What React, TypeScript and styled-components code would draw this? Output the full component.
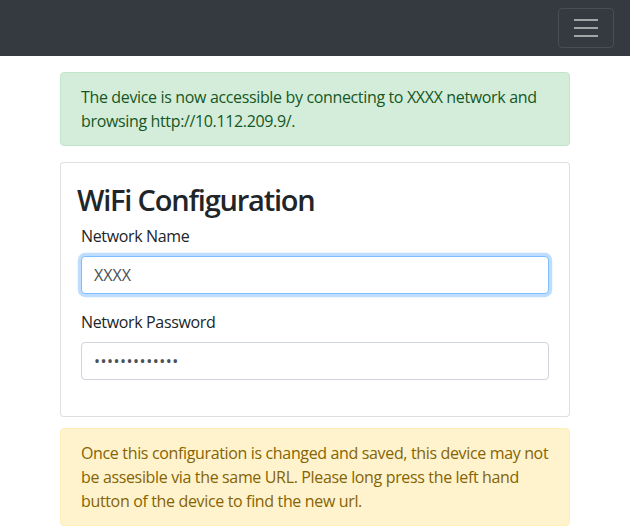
import React from 'react';
import styled, { createGlobalStyle } from 'styled-components';

const GlobalStyle = createGlobalStyle`
  * { box-sizing: border-box; }
  body {
    margin: 0;
    background: #ffffff;
    color: #212529;
    font-family: "Open Sans", "Noto Sans", sans-serif;
    font-size: 16px;
    line-height: 1.5;
    letter-spacing: -0.35px;
  }
`;

const App = () => {
  return (
    <>
      <GlobalStyle />
      <Navbar>
        <Toggler aria-label="Toggle navigation">
          <TogglerBar />
          <TogglerBar />
          <TogglerBar />
        </Toggler>
      </Navbar>
      <Container>
        <Alert variant="success">
          The device is now accessible by connecting to XXXX network and browsing http://10.112.209.9/.
        </Alert>
        <Card>
          <CardTitle>WiFi Configuration</CardTitle>
          <Form>
            <FormGroup>
              <Label>Network Name</Label>
              <Input type="text" defaultValue="XXXX" focused />
            </FormGroup>
            <FormGroup>
              <Label>Network Password</Label>
              <Input type="password" defaultValue="•••••••••••••" masked />
            </FormGroup>
          </Form>
        </Card>
        <Alert variant="warning">
          Once this configuration is changed and saved, this device may not be assesible via the same URL. Please long press the left hand button of the device to find the new url.
        </Alert>
      </Container>
    </>
  );
};

export default App;

const Navbar = styled.nav`
  height: 56px;
  background-color: #343a40;
  display: flex;
  justify-content: flex-end;
  align-items: center;
  padding: 0 16px;
`;

const Toggler = styled.button`
  width: 56px;
  height: 40px;
  background: transparent;
  border: 1px solid rgba(255, 255, 255, 0.1);
  border-radius: 4px;
  display: flex;
  flex-direction: column;
  justify-content: center;
  align-items: center;
  gap: 6px;
  padding: 0;
`;

const TogglerBar = styled.span`
  display: block;
  width: 24px;
  height: 2px;
  background: rgba(255, 255, 255, 0.55);
`;

const Container = styled.main`
  width: 510px;
  margin: 16px auto 0;
  display: flex;
  flex-direction: column;
`;

const alertColors = {
  success: { bg: '#d4edda', fg: '#155724', border: '#c3e6cb' },
  warning: { bg: '#fff3cd', fg: '#856404', border: '#ffeeba' },
};

const Alert = styled.div<{ variant: 'success' | 'warning' }>`
  padding: 12px 20px;
  margin-bottom: 16px;
  border-radius: 4px;
  background-color: ${({ variant }) => alertColors[variant].bg};
  color: ${({ variant }) => alertColors[variant].fg};
  border: 1px solid ${({ variant }) => alertColors[variant].border};
`;

const Card = styled.section`
  border: 1px solid rgba(0, 0, 0, 0.125);
  border-radius: 4px;
  background: #ffffff;
  margin-bottom: 11px;
`;

const CardTitle = styled.h2`
  margin: 0 0 8px;
  padding: 20px 16px 0;
  height: 53px;
  font-size: 29px;
  font-weight: 600;
  line-height: 1.2;
  letter-spacing: -1.2px;
`;

const Form = styled.form`
  padding: 0 20px 20px;
`;

const FormGroup = styled.div`
  margin-bottom: 16px;
`;

const Label = styled.label`
  display: inline-block;
  margin-bottom: 8px;
`;

const Input = styled.input<{ focused?: boolean; masked?: boolean }>`
  display: block;
  width: 100%;
  height: 38px;
  padding: 6px 12px;
  font-family: inherit;
  font-size: 16px;
  line-height: 1.5;
  letter-spacing: ${({ masked }) => (masked ? '0.5px' : 'normal')};
  color: #495057;
  background: #ffffff;
  border: 1px solid ${({ focused }) => (focused ? '#80bdff' : '#ced4da')};
  border-radius: 4px;
  outline: none;
  box-shadow: ${({ focused }) => (focused ? '0 0 0 3.2px rgba(0, 123, 255, 0.25)' : 'none')};
`;
